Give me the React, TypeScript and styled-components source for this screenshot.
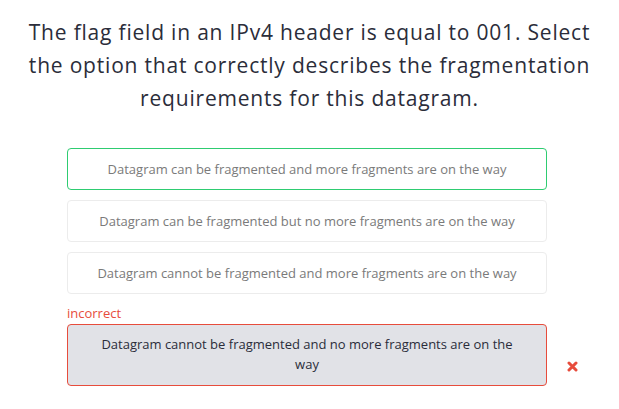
import React from 'react';
import styled, { createGlobalStyle } from 'styled-components';

const GlobalStyle = createGlobalStyle`
    body {
        margin: 0;
        background: #fff;
        font-family: 'Open Sans', Lato, sans-serif;
    }
`;

const Page = styled.div`
    width: 619px;
    padding-top: 16px;
`;

const Question = styled.h1`
    margin: 0 auto;
    width: 580px;
    text-align: center;
    font-size: 21px;
    font-weight: 400;
    line-height: 33px;
    letter-spacing: 0.8px;
    color: #2b2d3a;
`;

const Options = styled.div`
    display: flex;
    flex-direction: column;
    gap: 10px;
    margin: 33px 0 0 67px;
    width: 480px;
`;

const OptionBox = styled.div<{ state: 'correct' | 'wrong' | 'idle' }>`
    box-sizing: border-box;
    flex: none;
    width: 480px;
    min-height: 42px;
    display: flex;
    align-items: center;
    justify-content: center;
    text-align: center;
    padding: ${(p) => (p.state === 'wrong' ? '9px 28px 11px' : '0 16px')};
    border-radius: 4px;
    font-size: 13px;
    line-height: 20px;
    border: 1px solid
        ${(p) =>
            p.state === 'correct'
                ? '#2ecc71'
                : p.state === 'wrong'
                ? '#e74c3c'
                : '#ececec'};
    background: ${(p) => (p.state === 'wrong' ? '#e1e2e7' : '#fff')};
    color: ${(p) => (p.state === 'wrong' ? '#2b2d3a' : '#7a7a7a')};
`;

const Answer = styled.div`
    display: flex;
    flex-direction: column;
`;

const Label = styled.div`
    color: #e74c3c;
    font-size: 13px;
    line-height: 18px;
    margin-bottom: 2px;
`;

const AnswerRow = styled.div`
    display: flex;
    align-items: center;
`;

const Cross = styled.svg`
    flex: none;
    margin: 22px 0 0 20px;
`;

const App = () => (
    <Page>
        <GlobalStyle />
        <Question>
            The flag field in an IPv4 header is equal to 001. Select the option
            that correctly describes the fragmentation requirements for this
            datagram.
        </Question>
        <Options>
            <OptionBox state="correct">
                Datagram can be fragmented and more fragments are on the way
            </OptionBox>
            <OptionBox state="idle">
                Datagram can be fragmented but no more fragments are on the way
            </OptionBox>
            <OptionBox state="idle">
                Datagram cannot be fragmented and more fragments are on the way
            </OptionBox>
            <Answer>
                <Label>incorrect</Label>
                <AnswerRow>
                    <OptionBox state="wrong">
                        Datagram cannot be fragmented and no more fragments are
                        on the way
                    </OptionBox>
                    <Cross width="11" height="11" viewBox="0 0 11 11">
                        <path
                            d="M2 2 L9 9 M9 2 L2 9"
                            stroke="#e74c3c"
                            strokeWidth="3"
                            strokeLinecap="round"
                        />
                    </Cross>
                </AnswerRow>
            </Answer>
        </Options>
    </Page>
);

export default App;
